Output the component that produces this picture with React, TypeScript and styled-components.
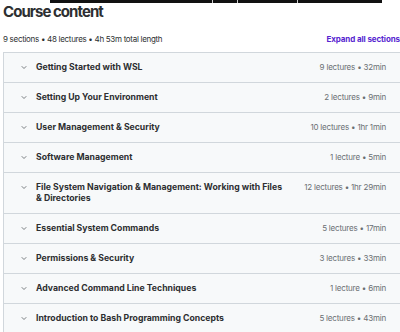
import React from "react";
import styled, { createGlobalStyle } from "styled-components";

const GlobalStyle = createGlobalStyle`
  html, body {
    margin: 0;
    padding: 0;
    background: #fff;
    overflow: hidden;
  }
  body {
    font-family: Inter, "Liberation Sans", sans-serif;
    color: #2d2f31;
  }
`;

const Page = styled.div`
  width: 400px;
  height: 332px;
  overflow: hidden;
  padding-left: 3px;
  box-sizing: border-box;
`;

// bottom of the caption bar cut off by the screenshot
const CaptionStrip = styled.div`
  margin-left: 47px;
  width: 332px;
  height: 3px;
  background: #111;
  display: flex;
  justify-content: flex-end;
`;

const StripDivider = styled.span<{ right: number }>`
  width: 1px;
  height: 3px;
  background: #cfcfcf;
  margin-right: ${(p) => p.right}px;
`;

const Title = styled.h2`
  margin: 1px 0 0;
  font-size: 15px;
  line-height: 16px;
  font-weight: 700;
  letter-spacing: -0.95px;
  color: #2d2f31;
`;

const SummaryRow = styled.div`
  display: flex;
  justify-content: space-between;
  align-items: center;
  margin-top: 13px;
  height: 12px;
  font-size: 8px;
  white-space: nowrap;
`;

const Summary = styled.span`
  color: #2d2f31;
  letter-spacing: -0.3px;
`;

const ExpandAll = styled.button`
  border: none;
  background: none;
  padding: 0;
  font-family: inherit;
  font-size: 8px;
  font-weight: 700;
  color: #5624d0;
  letter-spacing: -0.1px;
  cursor: pointer;
`;

const Sections = styled.div`
  margin-top: 7px;
  border: 1px solid #d1d7dc;
  border-bottom: none;
  border-right: none;
  width: 397px;
  box-sizing: border-box;
`;

const SectionHeader = styled.div`
  display: flex;
  align-items: flex-start;
  background: #f7f9fa;
  border-bottom: 1px solid #d1d7dc;
  padding: 9px 14px 9px 16px;
  line-height: 11px;
`;

const Chevron = styled.svg`
  flex: none;
  width: 8px;
  height: 11px;
  margin-right: 8px;
`;

const SectionTitle = styled.span`
  flex: 1;
  font-size: 8.7px;
  font-weight: 700;
  color: #2d2f31;
  padding-right: 15px;
`;

const SectionMeta = styled.span`
  flex: none;
  font-size: 8px;
  color: #6a6f73;
  letter-spacing: -0.2px;
  white-space: nowrap;
`;

const sections = [
  { title: "Getting Started with WSL", meta: "9 lectures • 32min" },
  { title: "Setting Up Your Environment", meta: "2 lectures • 9min" },
  { title: "User Management & Security", meta: "10 lectures • 1hr 1min" },
  { title: "Software Management", meta: "1 lecture • 5min" },
  {
    title: "File System Navigation & Management: Working with Files & Directories",
    meta: "12 lectures • 1hr 29min",
  },
  { title: "Essential System Commands", meta: "5 lectures • 17min" },
  { title: "Permissions & Security", meta: "3 lectures • 33min" },
  { title: "Advanced Command Line Techniques", meta: "1 lecture • 6min" },
  { title: "Introduction to Bash Programming Concepts", meta: "5 lectures • 43min" },
];

const App: React.FC = () => {
  return (
    <Page>
      <GlobalStyle />
      <CaptionStrip>
        <StripDivider right={24} />
        <StripDivider right={59} />
        <StripDivider right={84} />
      </CaptionStrip>
      <Title>Course content</Title>
      <SummaryRow>
        <Summary>9 sections • 48 lectures • 4h 53m total length</Summary>
        <ExpandAll>Expand all sections</ExpandAll>
      </SummaryRow>
      <Sections>
        {sections.map((s) => (
          <SectionHeader key={s.title}>
            <Chevron viewBox="0 0 8 11">
              <path d="M2 4.5 L4 6.5 L6 4.5" fill="none" stroke="#6a6f73" strokeWidth="0.9" strokeLinecap="round" strokeLinejoin="round" />
            </Chevron>
            <SectionTitle>{s.title}</SectionTitle>
            <SectionMeta>{s.meta}</SectionMeta>
          </SectionHeader>
        ))}
      </Sections>
    </Page>
  );
};

export default App;
